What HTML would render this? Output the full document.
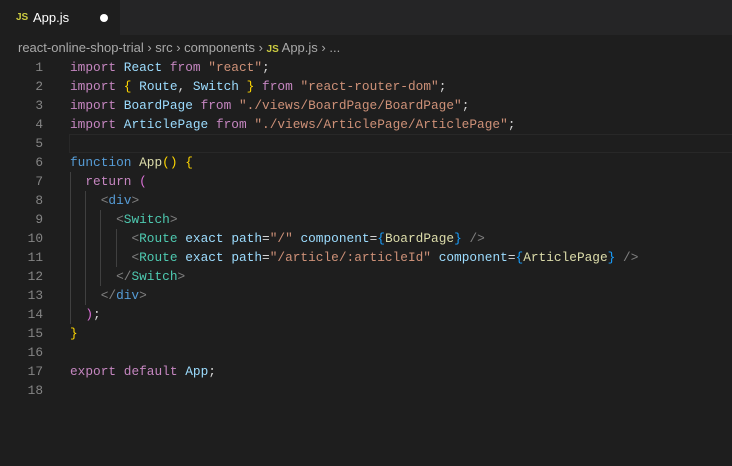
<!DOCTYPE html>
<html><head><meta charset="utf-8"><style>
body{margin:0;width:732px;height:466px;background:#1e1e1e;overflow:hidden;font-family:"Liberation Sans",sans-serif;position:relative}
.tabbar{position:absolute;left:0;top:0;width:732px;height:35px;background:#252526}
.tab{position:absolute;left:0;top:0;width:120px;height:35px;background:#1e1e1e;color:#fff;font-size:13px}
.js{color:#cbcb41;font-weight:bold;font-size:10px;font-family:"Liberation Sans",sans-serif}
.crumb{position:absolute;left:18px;top:40px;color:#a9a9a9;font-size:13px;white-space:pre}
.code{position:absolute;left:0;top:58px;width:732px;font-family:"Liberation Mono",monospace;font-size:12.8px}
.l{height:19px;line-height:19px;position:relative}
.n{position:absolute;left:0;width:43px;color:#858585;text-align:right}
.c{position:absolute;left:70px;color:#d4d4d4;white-space:pre}
.k{color:#c586c0}.v{color:#9cdcfe}.s{color:#ce9178}.b{color:#569cd6}.f{color:#dcdcaa}.t{color:#4ec9b0}.g{color:#808080}
.y{color:#ffd700}.p{color:#da70d6}.bl{color:#179fff}
.guide{position:absolute;width:1px;background:#404040}
</style></head><body>
<div class="tabbar"><div class="tab"><span class="js" style="position:absolute;left:16px;top:12px">JS</span><span style="position:absolute;left:33px;top:10px">App.js</span><span style="position:absolute;left:100px;top:14px;width:8px;height:8px;border-radius:50%;background:#fff"></span></div></div>
<div class="crumb">react-online-shop-trial › src › components › <span class="js">JS</span> App.js › ...</div>
<div style="position:absolute;left:69px;top:134px;width:663px;height:17px;border:1px solid #282828"></div>
<div class="guide" style="left:70px;top:172px;height:152px"></div>
<div class="guide" style="left:85px;top:191px;height:114px"></div>
<div class="guide" style="left:100px;top:210px;height:76px"></div>
<div class="guide" style="left:116px;top:229px;height:38px"></div>
<div class="code"><div class="l"><span class="n">1</span><span class="c"><span class="k">import</span> <span class="v">React</span> <span class="k">from</span> <span class="s">"react"</span>;</span></div><div class="l"><span class="n">2</span><span class="c"><span class="k">import</span> <span class="y">{</span> <span class="v">Route</span>, <span class="v">Switch</span> <span class="y">}</span> <span class="k">from</span> <span class="s">"react-router-dom"</span>;</span></div><div class="l"><span class="n">3</span><span class="c"><span class="k">import</span> <span class="v">BoardPage</span> <span class="k">from</span> <span class="s">"./views/BoardPage/BoardPage"</span>;</span></div><div class="l"><span class="n">4</span><span class="c"><span class="k">import</span> <span class="v">ArticlePage</span> <span class="k">from</span> <span class="s">"./views/ArticlePage/ArticlePage"</span>;</span></div><div class="l"><span class="n">5</span></div><div class="l"><span class="n">6</span><span class="c"><span class="b">function</span> <span class="f">App</span><span class="y">()</span> <span class="y">{</span></span></div><div class="l"><span class="n">7</span><span class="c">  <span class="k">return</span> <span class="p">(</span></span></div><div class="l"><span class="n">8</span><span class="c">    <span class="g">&lt;</span><span class="b">div</span><span class="g">&gt;</span></span></div><div class="l"><span class="n">9</span><span class="c">      <span class="g">&lt;</span><span class="t">Switch</span><span class="g">&gt;</span></span></div><div class="l"><span class="n">10</span><span class="c">        <span class="g">&lt;</span><span class="t">Route</span> <span class="v">exact</span> <span class="v">path</span>=<span class="s">"/"</span> <span class="v">component</span>=<span class="bl">{</span><span class="f">BoardPage</span><span class="bl">}</span> <span class="g">/&gt;</span></span></div><div class="l"><span class="n">11</span><span class="c">        <span class="g">&lt;</span><span class="t">Route</span> <span class="v">exact</span> <span class="v">path</span>=<span class="s">"/article/:articleId"</span> <span class="v">component</span>=<span class="bl">{</span><span class="f">ArticlePage</span><span class="bl">}</span> <span class="g">/&gt;</span></span></div><div class="l"><span class="n">12</span><span class="c">      <span class="g">&lt;/</span><span class="t">Switch</span><span class="g">&gt;</span></span></div><div class="l"><span class="n">13</span><span class="c">    <span class="g">&lt;/</span><span class="b">div</span><span class="g">&gt;</span></span></div><div class="l"><span class="n">14</span><span class="c">  <span class="p">)</span>;</span></div><div class="l"><span class="n">15</span><span class="c"><span class="y">}</span></span></div><div class="l"><span class="n">16</span></div><div class="l"><span class="n">17</span><span class="c"><span class="k">export</span> <span class="k">default</span> <span class="v">App</span>;</span></div><div class="l"><span class="n">18</span></div></div>
</body></html>
